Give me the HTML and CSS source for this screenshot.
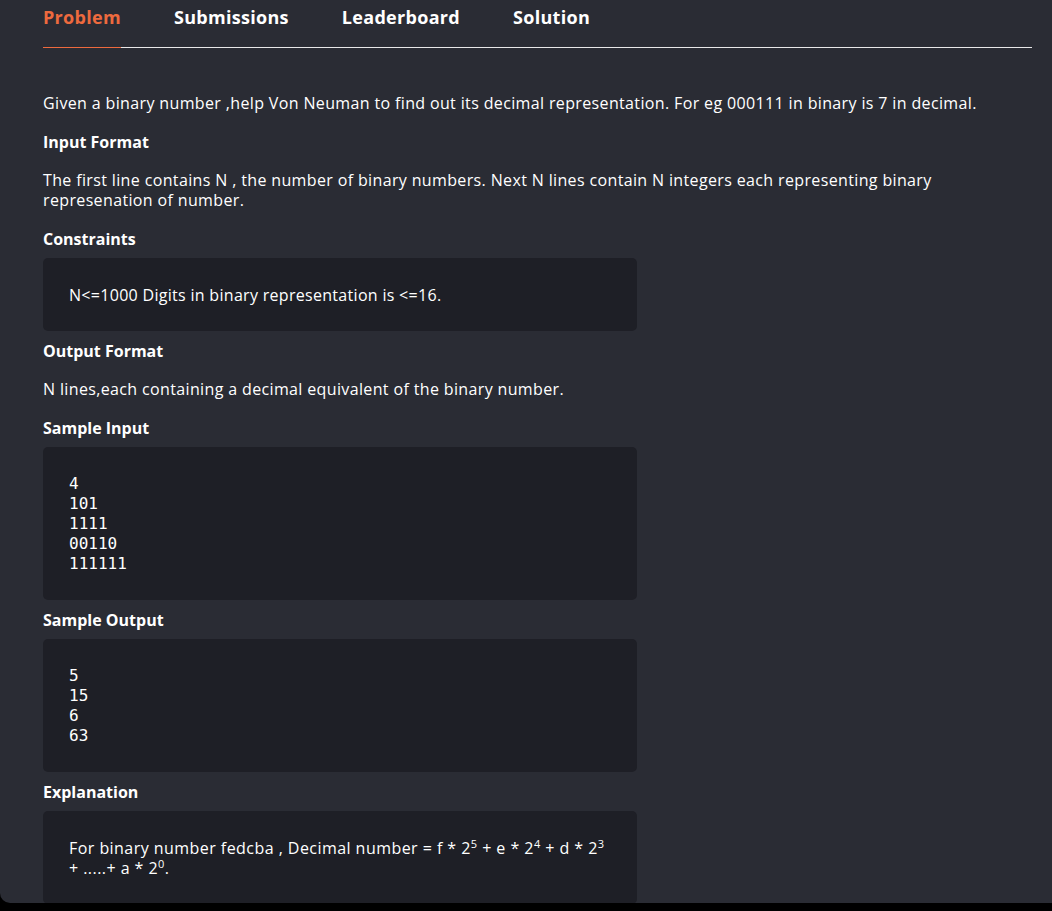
FILE: index.html
```html
<!DOCTYPE html>
<html lang="en">
<head>
<meta charset="utf-8">
<title>Problem</title>
<link rel="stylesheet" href="styles.css">
</head>
<body>
<div class="panel">
  <nav class="tabs">
    <a class="tab active">Problem</a>
    <a class="tab">Submissions</a>
    <a class="tab">Leaderboard</a>
    <a class="tab">Solution</a>
  </nav>
  <main class="content">
    <p class="text first">Given a binary number ,help Von Neuman to find out its decimal representation. For eg 000111 in binary is 7 in decimal.</p>
    <h3 class="heading">Input Format</h3>
    <p class="text">The first line contains N , the number of binary numbers. Next N lines contain N integers each representing binary represenation of number.</p>
    <h3 class="heading">Constraints</h3>
    <div class="box"><p class="box-text">N&lt;=1000 Digits in binary representation is &lt;=16.</p></div>
    <h3 class="heading">Output Format</h3>
    <p class="text">N lines,each containing a decimal equivalent of the binary number.</p>
    <h3 class="heading">Sample Input</h3>
    <div class="box"><pre class="code">4
101
1111
00110
111111</pre></div>
    <h3 class="heading">Sample Output</h3>
    <div class="box"><pre class="code">5
15
6
63</pre></div>
    <h3 class="heading">Explanation</h3>
    <div class="box"><p class="box-text explain">For binary number fedcba , Decimal number = f * 2<sup>5</sup> + e * 2<sup>4</sup> + d * 2<sup>3</sup> + .....+ a * 2<sup>0</sup>.</p></div>
  </main>
</div>
</body>
</html>
```

FILE: styles.css
```css
html, body {
  margin: 0;
  padding: 0;
  background: #000;
}

body {
  font-family: "Open Sans", "Noto Sans", sans-serif;
  color: #fff;
}

.panel {
  height: 903px;
  overflow: hidden;
  background: #2a2c34;
  border-bottom-left-radius: 10px;
}

.tabs {
  display: flex;
  gap: 53px;
  margin: 0 20px 0 43px;
  border-bottom: 1px solid #e8e8e8;
}

.tab {
  font-size: 18px;
  font-weight: 700;
  line-height: 24px;
  letter-spacing: 0.3px;
  padding: 5px 0 18px;
  color: #fff;
  margin-bottom: -1px;
  border-bottom: 1px solid transparent;
}

.tab.active {
  color: #ee6a3e;
  border-bottom-color: #ee6a3e;
}

.content {
  display: flex;
  flex-direction: column;
  align-items: flex-start;
  padding: 45px 20px 0 43px;
}

.text {
  font-size: 16px;
  line-height: 20px;
  letter-spacing: 0.36px;
  margin: 9px 0 19px;
}

.text.first {
  margin-top: 0;
}

.heading {
  font-size: 16px;
  font-weight: 700;
  line-height: 20px;
  margin: 0 0 9px;
}

.box {
  width: 542px;
  background: #1e1f26;
  border-radius: 5px;
  padding: 27px 26px 26px;
  margin-bottom: 10px;
}

.box-text {
  margin: 0;
  font-size: 16px;
  line-height: 20px;
  letter-spacing: 0.3px;
}

.box-text.explain {
  letter-spacing: 0.45px;
}

.box-text sup {
  font-size: 11px;
  line-height: 0;
  vertical-align: 6px;
}

.code {
  margin: 0;
  font-family: "DejaVu Sans Mono", monospace;
  font-size: 16px;
  line-height: 20px;
  color: #fff;
}
```
